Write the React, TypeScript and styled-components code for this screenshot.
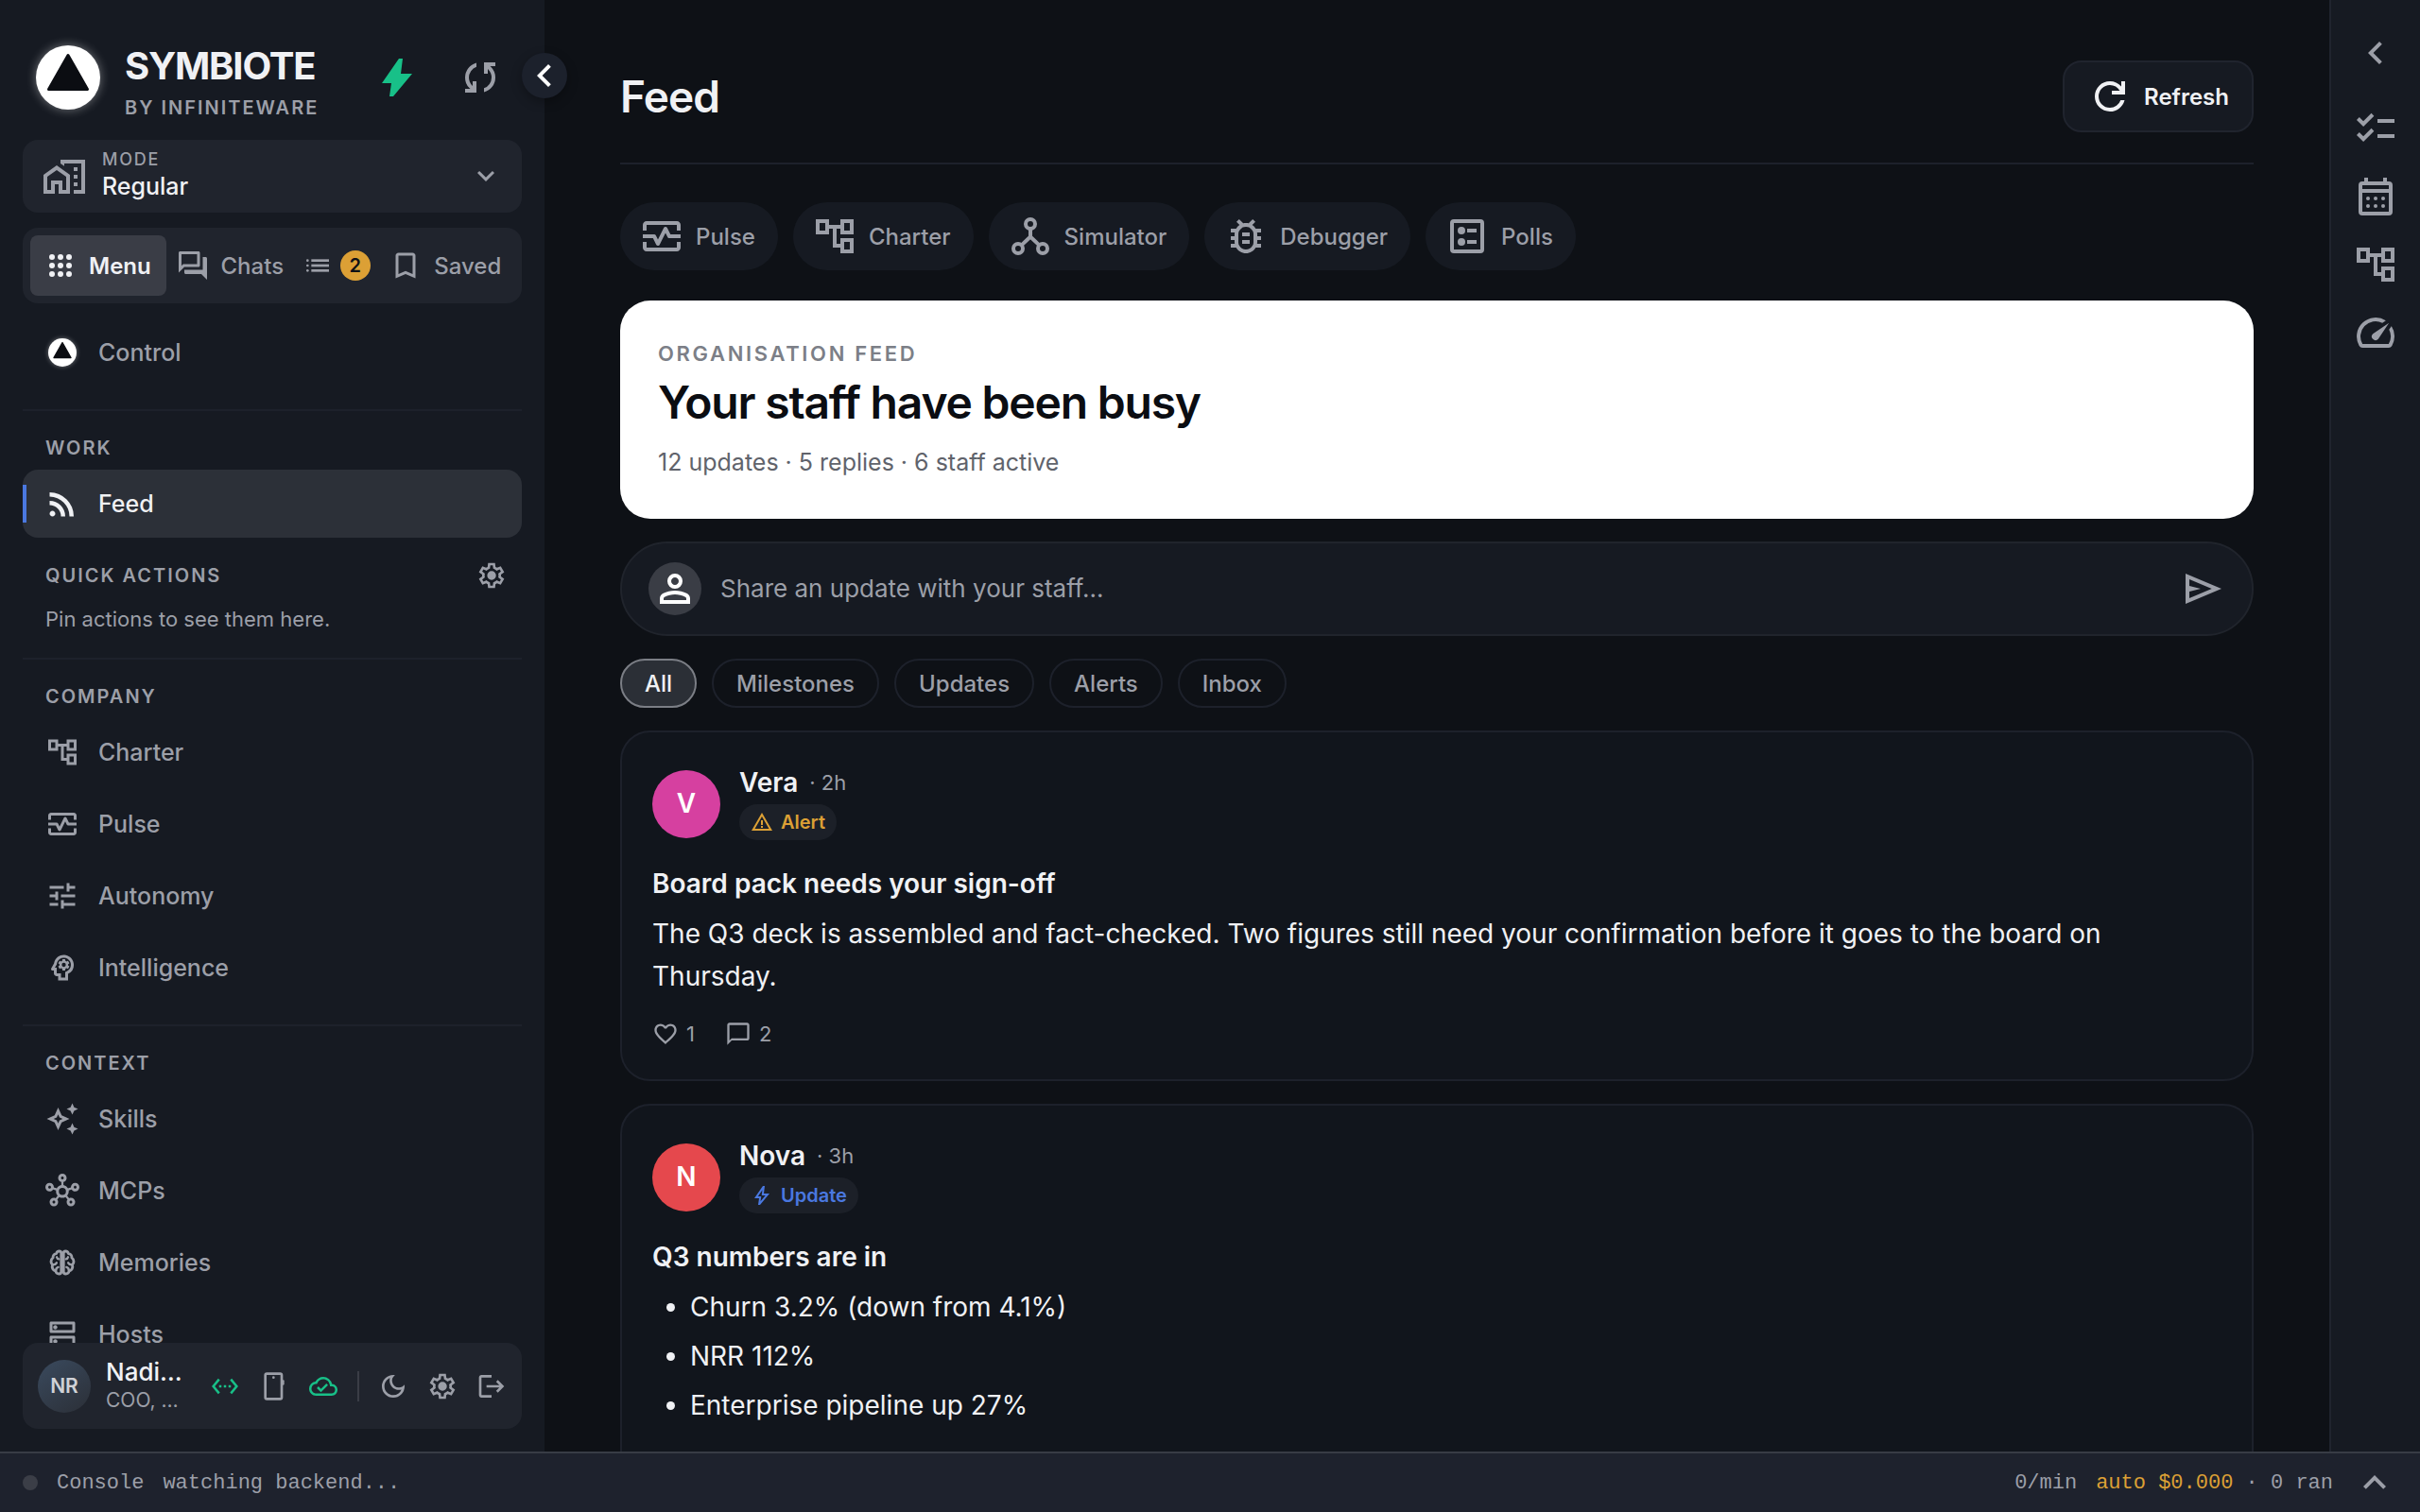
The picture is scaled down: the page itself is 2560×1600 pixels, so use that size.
import React from "react";
import styled, { createGlobalStyle, css } from "styled-components";
import {
  MdChatBubbleOutline,
  MdChecklist,
  MdFavoriteBorder,
  MdBookmarkBorder,
  MdLogout,
  MdOutlineAccountTree,
  MdOutlineAutoAwesome,
  MdOutlineBugReport,
  MdOutlineCloudDone,
  MdOutlineDarkMode,
  MdOutlineDns,
  MdOutlineForum,
  MdOutlineHomeWork,
  MdOutlineHub,
  MdOutlineMonitorHeart,
  MdOutlinePsychology,
  MdSettingsEthernet,
  MdSpeed,
  MdTune,
  MdWarningAmber,
} from "react-icons/md";

const color = {
  page: "#0e1116",
  panel: "#161a22",
  raised: "#20242d",
  active: "#2c3038",
  card: "#11151c",
  line: "#1d212b",
  text: "#f0f1f4",
  muted: "#9c9fa8",
  amber: "#dca035",
  green: "#18c088",
  blue: "#4a78e0",
};

const sans = `Inter, "Liberation Sans", sans-serif`;
const mono = `"Liberation Mono", monospace`;

const GlobalStyle = createGlobalStyle`
  *, *::before, *::after { box-sizing: border-box; }
  body { margin: 0; background: ${color.page}; color: ${color.text}; font-family: ${sans}; font-size: 24px; }
  button, input, select { font: inherit; color: inherit; margin: 0; padding: 0; border: 0; background: none; }
  button { cursor: pointer; }
  h1, h2, h3, p, ul { margin: 0; padding: 0; font: inherit; }
  a { color: inherit; text-decoration: none; }
  svg { display: block; flex-shrink: 0; }
`;

/* ---------- icons ---------- */

type IconProps = { size?: number };

const Symbol = ({ d, size = 48 }: IconProps & { d: string }) => (
  <svg width={size} height={size} viewBox="0 -960 960 960" fill="currentColor" aria-hidden="true">
    <path d={d} />
  </svg>
);

const paths = {
  bolt: "m320-80 40-280H160l360-520h80l-40 320h240L400-80h-80Z",
  boltOutline: "m422-232 207-248H469l29-227-185 267h139l-30 208ZM320-80l40-280H160l360-520h80l-40 320h240L400-80h-80Z",
  sync: "M160-160v-80h110l-16-14q-52-46-73-105t-21-119q0-111 66.5-197.5T400-790v84q-72 26-116 88.5T240-478q0 45 17 87.5t53 78.5l10 10v-98h80v240H160Zm400-10v-84q72-26 116-88.5T720-482q0-45-17-87.5T650-648l-10-10v98h-80v-240h240v80H690l16 14q49 49 71.5 106.5T800-482q0 111-66.5 197.5T560-170Z",
  refresh: "M480-160q-134 0-227-93t-93-227q0-134 93-227t227-93q69 0 132 28.5T720-690v-110h80v280H520v-80h168q-32-56-87.5-88T480-720q-100 0-170 70t-70 170q0 100 70 170t170 70q77 0 139-44t87-116h84q-28 106-114 173t-196 67Z",
  settings: "m370-80-16-128q-13-5-24.5-12T307-235l-119 50L78-375l103-78q-1-7-1-13.5v-27q0-6.5 1-13.5L78-585l110-190 119 50q11-8 23-15t24-12l16-128h220l16 128q13 5 24.5 12t22.5 15l119-50 110 190-103 78q1 7 1 13.5v27q0 6.5-2 13.5l103 78-110 190-118-50q-11 8-23 15t-24 12L590-80H370Zm70-80h79l14-106q31-8 57.5-23.5T639-327l99 41 39-68-86-65q5-14 7-29.5t2-31.5q0-16-2-31.5t-7-29.5l86-65-39-68-99 42q-22-23-48.5-38.5T533-694l-13-106h-79l-14 106q-31 8-57.5 23.5T321-633l-99-41-39 68 86 64q-5 15-7 30t-2 32q0 16 2 31t7 30l-86 65 39 68 99-42q22 23 48.5 38.5T427-266l13 106Zm42-180q58 0 99-41t41-99q0-58-41-99t-99-41q-59 0-99.5 41T342-480q0 58 40.5 99t99.5 41Z",
  send: "M120-160v-640l760 320-760 320Zm80-120 474-200-474-200v140l240 60-240 60v140Z",
  person: "M480-480q-66 0-113-47t-47-113q0-66 47-113t113-47q66 0 113 47t47 113q0 66-47 113t-113 47ZM160-160v-112q0-34 17.5-62.5T224-378q62-31 126-46.5T480-440q66 0 130 15.5T736-378q29 15 46.5 43.5T800-272v112H160Zm80-80h480v-32q0-11-5.5-20T700-306q-54-27-109-40.5T480-360q-56 0-111 13.5T260-306q-9 5-14.5 14t-5.5 20v32Zm240-320q33 0 56.5-23.5T560-640q0-33-23.5-56.5T480-720q-33 0-56.5 23.5T400-640q0 33 23.5 56.5T480-560Z",
  feed: "M200-120q-33 0-56.5-23.5T120-200q0-33 23.5-56.5T200-280q33 0 56.5 23.5T280-200q0 33-23.5 56.5T200-120Zm480 0q0-117-44-218.5T516-516q-76-76-177.5-120T120-680v-120q142 0 265 53t216 146q93 93 146 216t53 265H680Zm-240 0q0-67-25-124.5T346-346q-44-44-101.5-69T120-440v-120q92 0 171.5 34.5T431-431q60 60 94.5 139.5T560-120H440Z",
  chevronLeft: "M560-240 320-480l240-240 56 56-184 184 184 184-56 56Z",
  expandLess: "m296-345-56-56 240-240 240 240-56 56-184-184-184 184Z",
  expandMore: "M480-345 240-585l56-56 184 184 184-184 56 56-240 240Z",
};

const AppsIcon = ({ size = 36 }: IconProps) => (
  <svg width={size} height={size} viewBox="0 0 24 24" fill="currentColor" aria-hidden="true">
    {[6, 12, 18].flatMap((y) => [6, 12, 18].map((x) => <circle key={`${x}-${y}`} cx={x} cy={y} r="2" />))}
  </svg>
);

const ListIcon = ({ size = 32 }: IconProps) => (
  <svg width={size} height={size} viewBox="0 0 24 24" fill="currentColor" aria-hidden="true">
    {[8, 12, 16].map((y) => (
      <g key={y}>
        <circle cx="4" cy={y} r="1" />
        <rect x="7" y={y - 1} width="14" height="2" />
      </g>
    ))}
  </svg>
);

const SimulatorIcon = ({ size = 48 }: IconProps) => (
  <svg width={size} height={size} viewBox="0 0 24 24" fill="none" stroke="currentColor" strokeWidth="2" aria-hidden="true">
    <circle cx="12" cy="5.5" r="2.5" />
    <circle cx="5.5" cy="18.5" r="2.5" />
    <circle cx="18.5" cy="18.5" r="2.5" />
    <path d="M12 8v4.5M7.2 16.8 12 12.3l4.8 4.5" />
  </svg>
);

const PollsIcon = ({ size = 48 }: IconProps) => (
  <svg width={size} height={size} viewBox="0 0 24 24" fill="currentColor" aria-hidden="true">
    <rect x="4" y="4" width="16" height="16" rx="1" fill="none" stroke="currentColor" strokeWidth="2" />
    <circle cx="9" cy="9" r="2" />
    <circle cx="9" cy="15" r="2" />
    <path d="M12 8h5v2h-5zM12 14h5v2h-5z" />
  </svg>
);

const CalendarIcon = ({ size = 48 }: IconProps) => (
  <svg width={size} height={size} viewBox="0 0 24 24" fill="currentColor" aria-hidden="true">
    <path d="M19 4h-1V2h-2v2H8V2H6v2H5a2 2 0 0 0-2 2v14a2 2 0 0 0 2 2h14a2 2 0 0 0 2-2V6a2 2 0 0 0-2-2zm0 16H5V10h14v10zm0-12H5V6h14v2z" />
    {[13, 17].flatMap((y) => [8, 12, 16].map((x) => <circle key={`${x}-${y}`} cx={x} cy={y} r="1" />))}
  </svg>
);

const PhoneIcon = ({ size = 32 }: IconProps) => (
  <svg width={size} height={size} viewBox="0 0 24 24" fill="currentColor" aria-hidden="true">
    <rect x="5" y="2" width="13" height="20" rx="1.2" fill="none" stroke="currentColor" strokeWidth="2" />
    <circle cx="11.5" cy="5" r="1" />
    <rect x="18.4" y="7" width="1.6" height="4" rx="0.6" />
  </svg>
);

const BrainIcon = ({ size = 36 }: IconProps) => (
  <svg width={size} height={size} viewBox="0 0 24 24" fill="none" stroke="currentColor" strokeWidth="1.9" strokeLinecap="round" strokeLinejoin="round" aria-hidden="true">
    <path d="M11.2 5.4C11.2 4.5 10.6 4 9.8 4 8.7 4 8 4.7 7.8 5.7 6.3 5.8 5.2 7 5.4 8.6 4.4 9.3 4 10.5 4 11.4c0 .9.4 1.7 1 2.3-.6 1.9.3 3.8 2.2 4.3C7.5 19.3 8.5 20 9.6 20c.9 0 1.6-.6 1.6-1.5z" />
    <path d="M12.8 5.4C12.8 4.5 13.4 4 14.2 4c1.1 0 1.8.7 2 1.7 1.5.1 2.6 1.3 2.4 2.9 1 .7 1.4 1.9 1.4 2.8 0 .9-.4 1.7-1 2.3.6 1.9-.3 3.8-2.2 4.3-.3 1.3-1.3 2-2.4 2-.9 0-1.6-.6-1.6-1.5z" />
    <path
      d="M8 8.2c.2.9.8 1.3 1.5 1.4M5.2 13.5c1.2.1 2.2-.4 2.7-1.3M7.5 17.5c0-1.2.6-1.9 1.6-2.2M16 8.2c-.2.9-.8 1.3-1.5 1.4M18.8 13.5c-1.2.1-2.2-.4-2.7-1.3M16.5 17.5c0-1.2-.6-1.9-1.6-2.2"
      strokeWidth="1.6"
    />
  </svg>
);

const LogoGlow = styled.span<{ $size: number }>`
  display: grid;
  place-items: center;
  flex-shrink: 0;
  width: ${(p) => p.$size}px;
  height: ${(p) => p.$size}px;
  border-radius: 50%;
  background: #fff;
  box-shadow: 0 0 ${(p) => Math.round(p.$size / 6)}px rgba(255, 255, 255, 0.4);
`;

const Logo = ({ size }: { size: number }) => (
  <LogoGlow $size={size}>
    <svg width={size} height={size} viewBox="0 0 68 68" aria-hidden="true">
      <path d="M34 10.5 54.5 46.5H13.5z" fill="#0b0d12" stroke="#0b0d12" strokeWidth="3" strokeLinejoin="round" />
    </svg>
  </LogoGlow>
);

/* ---------- frame ---------- */

const Shell = styled.div`
  display: flex;
  flex-direction: column;
  height: 100vh;
  overflow: hidden;
`;

const Body = styled.div`
  display: flex;
  flex: 1;
  min-height: 0;
`;

const Sidebar = styled.aside`
  position: relative;
  z-index: 1;
  display: flex;
  flex-direction: column;
  width: 576px;
  flex-shrink: 0;
  padding: 24px;
  background: ${color.panel};
`;

const IconButton = styled.button<{ $size?: number; $tint?: string }>`
  display: grid;
  place-items: center;
  width: ${(p) => p.$size ?? 48}px;
  height: ${(p) => p.$size ?? 48}px;
  flex-shrink: 0;
  color: ${(p) => p.$tint ?? color.muted};
`;

const CollapseButton = styled(IconButton)`
  position: absolute;
  top: 56px;
  right: -24px;
  border-radius: 50%;
  background: #1c212c;
  color: #fff;
  box-shadow: 0 4px 12px rgba(0, 0, 0, 0.3);
`;

const Brand = styled.header`
  display: flex;
  align-items: center;
  height: 116px;
  margin-bottom: 8px;
  padding: 0 20px 0 14px;
`;

const BrandText = styled.div`
  flex: 1;
  margin-left: 26px;
`;

const BrandName = styled.div`
  font-size: 40px;
  font-weight: 700;
  line-height: 60px;
  letter-spacing: -0.03em;
`;

const BrandBy = styled.div`
  margin-top: 4px;
  font-size: 20px;
  font-weight: 600;
  line-height: 20px;
  letter-spacing: 0.1em;
  color: ${color.muted};
`;

const BrandActions = styled.div`
  display: flex;
  gap: 40px;
`;

const ModePicker = styled.label`
  display: flex;
  align-items: center;
  gap: 16px;
  height: 77px;
  flex-shrink: 0;
  margin-bottom: 16px;
  padding: 0 20px;
  border-radius: 16px;
  background: ${color.raised};
  color: ${color.muted};
`;

const ModeText = styled.span`
  display: flex;
  flex-direction: column;
  flex: 1;
  padding-bottom: 3px;
`;

const ModeLabel = styled.span`
  font-size: 18px;
  font-weight: 500;
  line-height: 24px;
  letter-spacing: 0.1em;
`;

const ModeSelect = styled.select`
  appearance: none;
  font-size: 25px;
  font-weight: 500;
  line-height: 32px;
  color: ${color.text};
`;

const Tabs = styled.div`
  display: flex;
  height: 80px;
  flex-shrink: 0;
  margin-bottom: 16px;
  padding: 8px 12px 8px 8px;
  border-radius: 16px;
  background: ${color.raised};
`;

const Tab = styled.button<{ $active?: boolean; $gap?: number }>`
  display: flex;
  align-items: center;
  justify-content: center;
  gap: ${(p) => p.$gap ?? 12}px;
  flex: 1 1 auto;
  border-radius: 8px;
  font-size: 24px;
  font-weight: 500;
  color: ${color.muted};
  ${(p) =>
    p.$active &&
    css`
      flex: 0 0 auto;
      padding: 0 16px 0 14px;
      font-weight: 600;
      color: ${color.text};
      background: #3a3d46;
    `}
`;

const Count = styled.span`
  display: grid;
  place-items: center;
  width: 32px;
  height: 32px;
  border-radius: 50%;
  font-size: 20px;
  font-weight: 600;
  color: #0e1116;
  background: ${color.amber};
`;

const Nav = styled.nav`
  flex: 1;
  min-height: 0;
  overflow: hidden;
`;

const NavGroup = styled.section`
  display: flex;
  flex-direction: column;
  gap: 4px;
  & + & {
    margin-top: 24px;
    border-top: 2px solid ${color.line};
  }
`;

const GroupLabel = styled.h2`
  padding: 24px 24px 4px;
  font-size: 20px;
  font-weight: 600;
  line-height: 30px;
  letter-spacing: 0.1em;
  color: ${color.muted};
`;

const NavItem = styled.a<{ $active?: boolean }>`
  position: relative;
  display: flex;
  align-items: center;
  gap: 20px;
  height: 72px;
  flex-shrink: 0;
  padding: 0 24px;
  border-radius: 16px;
  font-size: 25px;
  font-weight: 500;
  color: ${color.muted};
  ${(p) =>
    p.$active &&
    css`
      color: ${color.text};
      background: ${color.active};
      &::before {
        content: "";
        position: absolute;
        left: 0;
        top: 16px;
        width: 4px;
        height: 40px;
        background: ${color.blue};
      }
    `}
`;

const NavIcon = styled.span`
  display: grid;
  place-items: center;
  width: 36px;
  height: 36px;
`;

const QuickHeader = styled.div`
  display: flex;
  align-items: center;
  justify-content: space-between;
  height: 48px;
  margin-top: 12px;
  padding: 0 8px 0 24px;
`;

const QuickLabel = styled(GroupLabel)`
  padding: 0;
`;

const QuickHint = styled.p`
  padding: 2px 24px 0;
  font-size: 22px;
  line-height: 33px;
  color: ${color.muted};
`;

const UserCard = styled.div`
  display: flex;
  align-items: center;
  height: 91px;
  flex-shrink: 0;
  padding: 0 8px 0 16px;
  border-radius: 16px;
  background: ${color.raised};
`;

const UserBadge = styled.span`
  display: grid;
  place-items: center;
  width: 56px;
  height: 56px;
  border-radius: 50%;
  font-size: 21px;
  font-weight: 600;
  color: #cfd1d6;
  background: linear-gradient(145deg, #3a4a5e, #2b2f37);
`;

const UserText = styled.div`
  flex: 1;
  min-width: 0;
  margin-left: 16px;
  line-height: 30px;
  white-space: nowrap;
`;

const UserName = styled.div`
  font-size: 26px;
  font-weight: 500;
`;

const UserRole = styled.div`
  font-size: 21px;
  color: ${color.muted};
`;

const UserActions = styled.div`
  display: flex;
  align-items: center;
  gap: 4px;
`;

const Separator = styled.span`
  width: 2px;
  height: 32px;
  margin: 0 8px;
  background: #3a3d46;
`;

/* ---------- main column ---------- */

const Main = styled.main`
  flex: 1;
  min-width: 0;
  overflow: hidden;
  padding: 64px 80px 0;
`;

const PageHeader = styled.header`
  display: flex;
  align-items: center;
  justify-content: space-between;
  padding-bottom: 32px;
  border-bottom: 2px solid ${color.line};
`;

const PageTitle = styled.h1`
  font-size: 46px;
  font-weight: 600;
  line-height: 76px;
  letter-spacing: -0.02em;
`;

const RefreshButton = styled.button`
  display: flex;
  align-items: center;
  gap: 12px;
  height: 76px;
  padding: 0 24px;
  border: 2px solid #20242e;
  border-radius: 20px;
  font-size: 24px;
  font-weight: 600;
  background: ${color.panel};
`;

const PillRow = styled.div`
  display: flex;
  gap: 16px;
  margin: 40px 0 32px;
`;

const Pill = styled.a`
  display: flex;
  align-items: center;
  gap: 12px;
  height: 72px;
  padding: 0 24px 0 20px;
  border-radius: 36px;
  font-size: 24px;
  font-weight: 500;
  color: ${color.muted};
  background: ${color.panel};
`;

const Hero = styled.section`
  padding: 40px;
  border-radius: 32px;
  color: #0b0d12;
  background: #fff;
`;

const HeroLabel = styled.p`
  font-size: 22px;
  font-weight: 600;
  line-height: 32px;
  letter-spacing: 0.12em;
  color: #7c7f87;
`;

const HeroTitle = styled.h2`
  font-size: 48px;
  font-weight: 600;
  line-height: 72px;
  letter-spacing: -0.025em;
`;

const HeroStats = styled.p`
  margin-top: 8px;
  font-size: 25px;
  line-height: 39px;
  color: #60636b;
`;

const Composer = styled.form`
  display: flex;
  align-items: center;
  gap: 20px;
  height: 100px;
  margin: 24px 0;
  padding: 0 28px;
  border: 2px solid #20242c;
  border-radius: 50px;
  background: ${color.panel};
`;

const ComposerAvatar = styled.span`
  display: grid;
  place-items: center;
  width: 56px;
  height: 56px;
  border-radius: 50%;
  color: #fff;
  background: #3a3d45;
`;

const ComposerInput = styled.input`
  flex: 1;
  min-width: 0;
  padding-bottom: 2px;
  font-size: 26px;
  outline: none;
  &::placeholder {
    color: ${color.muted};
    opacity: 1;
  }
`;

const Filters = styled.div`
  display: flex;
  gap: 16px;
  margin-bottom: 24px;
`;

const Filter = styled.button<{ $active?: boolean }>`
  height: 52px;
  padding: 0 24px;
  border: 2px solid ${(p) => (p.$active ? "#7b7e85" : color.line)};
  border-radius: 26px;
  font-size: 24px;
  font-weight: 500;
  color: ${(p) => (p.$active ? color.text : color.muted)};
  background: ${(p) => (p.$active ? "#2b2f36" : "transparent")};
`;

const Posts = styled.div`
  display: flex;
  flex-direction: column;
  gap: 24px;
`;

const Card = styled.article`
  padding: 37px 32px 32px;
  border: 2px solid ${color.line};
  border-radius: 32px;
  background: ${color.card};
  font-size: 28px;
  line-height: 45px;
`;

const CardHeader = styled.header`
  display: flex;
  align-items: center;
  gap: 20px;
  margin-bottom: 24px;
`;

const Avatar = styled.span<{ $tint: string }>`
  display: grid;
  place-items: center;
  width: 72px;
  height: 72px;
  border-radius: 50%;
  font-weight: 600;
  color: #fff;
  background: ${(p) => p.$tint};
`;

const Byline = styled.div`
  display: flex;
  align-items: center;
  gap: 12px;
  line-height: 32px;
`;

const Author = styled.span`
  font-weight: 600;
`;

const Age = styled.span`
  font-size: 22px;
  color: ${color.muted};
`;

const Kind = styled.span<{ $tint: string }>`
  display: inline-flex;
  align-items: center;
  gap: 8px;
  height: 38px;
  margin-top: 7px;
  padding: 0 12px;
  border-radius: 19px;
  font-size: 20px;
  font-weight: 600;
  line-height: 38px;
  vertical-align: top;
  color: ${(p) => p.$tint};
  background: #1c2028;
`;

const CardTitle = styled.h3`
  margin-bottom: 8px;
  font-weight: 600;
`;

const CardList = styled.ul`
  display: flex;
  flex-direction: column;
  gap: 7px;
  padding-left: 40px;
`;

const Reactions = styled.footer`
  display: flex;
  gap: 32px;
  margin-top: 22px;
`;

const Reaction = styled.button`
  display: flex;
  align-items: center;
  gap: 8px;
  font-size: 22px;
  line-height: 32px;
  color: ${color.muted};
`;

/* ---------- right rail and console ---------- */

const Rail = styled.aside`
  display: flex;
  flex-direction: column;
  align-items: center;
  width: 96px;
  flex-shrink: 0;
  padding-top: 20px;
  border-left: 2px solid #20242e;
  background: ${color.panel};
`;

const RailTools = styled.div`
  margin-top: 8px;
`;

const Console = styled.footer`
  display: flex;
  align-items: center;
  gap: 20px;
  height: 64px;
  flex-shrink: 0;
  padding: 0 24px;
  border-top: 2px solid #383c45;
  font-family: ${mono};
  font-size: 22px;
  color: ${color.muted};
  background: #1e222d;
`;

const ConsoleDot = styled.span`
  width: 16px;
  height: 16px;
  border-radius: 50%;
  background: #3b3e47;
`;

const ConsoleLog = styled.span`
  flex: 1;
`;

const Cost = styled.span`
  color: ${color.amber};
`;

/* ---------- data ---------- */

type Item = { label: string; icon: React.ReactNode };

const company: Item[] = [
  { label: "Charter", icon: <MdOutlineAccountTree size={36} /> },
  { label: "Pulse", icon: <MdOutlineMonitorHeart size={36} /> },
  { label: "Autonomy", icon: <MdTune size={36} /> },
  { label: "Intelligence", icon: <MdOutlinePsychology size={36} /> },
];

const context: Item[] = [
  { label: "Skills", icon: <MdOutlineAutoAwesome size={36} /> },
  { label: "MCPs", icon: <MdOutlineHub size={36} /> },
  { label: "Memories", icon: <BrainIcon /> },
  { label: "Hosts", icon: <MdOutlineDns size={36} /> },
];

const shortcuts: Item[] = [
  { label: "Pulse", icon: <MdOutlineMonitorHeart size={48} /> },
  { label: "Charter", icon: <MdOutlineAccountTree size={48} /> },
  { label: "Simulator", icon: <SimulatorIcon /> },
  { label: "Debugger", icon: <MdOutlineBugReport size={48} /> },
  { label: "Polls", icon: <PollsIcon /> },
];

const railTools: Item[] = [
  { label: "Tasks", icon: <MdChecklist size={48} /> },
  { label: "Calendar", icon: <CalendarIcon /> },
  { label: "Charter", icon: <MdOutlineAccountTree size={48} /> },
  { label: "Usage", icon: <MdSpeed size={48} /> },
];

const NavLinks = ({ items }: { items: Item[] }) => (
  <>
    {items.map((item) => (
      <NavItem key={item.label} href="#">
        <NavIcon>{item.icon}</NavIcon>
        {item.label}
      </NavItem>
    ))}
  </>
);

type PostProps = {
  author: string;
  age: string;
  tint: string;
  kind: string;
  kindTint: string;
  kindIcon: React.ReactNode;
  title: string;
  likes: number;
  replies: number;
  children: React.ReactNode;
};

const Post = (p: PostProps) => (
  <Card>
    <CardHeader>
      <Avatar $tint={p.tint}>{p.author[0]}</Avatar>
      <div>
        <Byline>
          <Author>{p.author}</Author>
          <Age>· {p.age}</Age>
        </Byline>
        <Kind $tint={p.kindTint}>
          {p.kindIcon}
          {p.kind}
        </Kind>
      </div>
    </CardHeader>
    <CardTitle>{p.title}</CardTitle>
    {p.children}
    <Reactions>
      <Reaction aria-label="Like">
        <MdFavoriteBorder size={28} />
        {p.likes}
      </Reaction>
      <Reaction aria-label="Reply">
        <MdChatBubbleOutline size={28} />
        {p.replies}
      </Reaction>
    </Reactions>
  </Card>
);

export default function App() {
  return (
    <Shell>
      <GlobalStyle />
      <Body>
        <Sidebar>
          <CollapseButton aria-label="Collapse sidebar">
            <Symbol d={paths.chevronLeft} />
          </CollapseButton>
          <Brand>
            <Logo size={68} />
            <BrandText>
              <BrandName>SYMBIOTE</BrandName>
              <BrandBy>BY INFINITEWARE</BrandBy>
            </BrandText>
            <BrandActions>
              <IconButton aria-label="Power" $tint={color.green}>
                <Symbol d={paths.bolt} />
              </IconButton>
              <IconButton aria-label="Sync">
                <Symbol d={paths.sync} />
              </IconButton>
            </BrandActions>
          </Brand>

          <ModePicker>
            <MdOutlineHomeWork size={48} />
            <ModeText>
              <ModeLabel>MODE</ModeLabel>
              <ModeSelect>
                <option>Regular</option>
              </ModeSelect>
            </ModeText>
            <Symbol d={paths.expandMore} size={36} />
          </ModePicker>

          <Tabs>
            <Tab $active>
              <AppsIcon />
              Menu
            </Tab>
            <Tab>
              <MdOutlineForum size={36} />
              Chats
            </Tab>
            <Tab $gap={8} aria-label="Queue">
              <ListIcon />
              <Count>2</Count>
            </Tab>
            <Tab>
              <MdBookmarkBorder size={36} />
              Saved
            </Tab>
          </Tabs>

          <Nav>
            <NavGroup>
              <NavItem href="#">
                <NavIcon>
                  <Logo size={30} />
                </NavIcon>
                Control
              </NavItem>
            </NavGroup>
            <NavGroup>
              <GroupLabel>WORK</GroupLabel>
              <NavItem href="#" $active>
                <NavIcon>
                  <Symbol d={paths.feed} size={36} />
                </NavIcon>
                Feed
              </NavItem>
              <QuickHeader>
                <QuickLabel>QUICK ACTIONS</QuickLabel>
                <IconButton aria-label="Configure quick actions">
                  <Symbol d={paths.settings} size={32} />
                </IconButton>
              </QuickHeader>
              <QuickHint>Pin actions to see them here.</QuickHint>
            </NavGroup>
            <NavGroup>
              <GroupLabel>COMPANY</GroupLabel>
              <NavLinks items={company} />
            </NavGroup>
            <NavGroup>
              <GroupLabel>CONTEXT</GroupLabel>
              <NavLinks items={context} />
            </NavGroup>
          </Nav>

          <UserCard>
            <UserBadge>NR</UserBadge>
            <UserText>
              <UserName>Nadi…</UserName>
              <UserRole>COO, …</UserRole>
            </UserText>
            <UserActions>
              <IconButton aria-label="Connection" $tint={color.green}>
                <MdSettingsEthernet size={30} />
              </IconButton>
              <IconButton aria-label="Device">
                <PhoneIcon />
              </IconButton>
              <IconButton aria-label="Cloud status" $tint={color.green}>
                <MdOutlineCloudDone size={30} />
              </IconButton>
              <Separator />
              <IconButton aria-label="Theme">
                <MdOutlineDarkMode size={32} />
              </IconButton>
              <IconButton aria-label="Settings">
                <Symbol d={paths.settings} size={32} />
              </IconButton>
              <IconButton aria-label="Log out">
                <MdLogout size={32} />
              </IconButton>
            </UserActions>
          </UserCard>
        </Sidebar>

        <Main>
          <PageHeader>
            <PageTitle>Feed</PageTitle>
            <RefreshButton>
              <Symbol d={paths.refresh} />
              Refresh
            </RefreshButton>
          </PageHeader>

          <PillRow>
            {shortcuts.map((s) => (
              <Pill key={s.label} href="#">
                {s.icon}
                {s.label}
              </Pill>
            ))}
          </PillRow>

          <Hero>
            <HeroLabel>ORGANISATION FEED</HeroLabel>
            <HeroTitle>Your staff have been busy</HeroTitle>
            <HeroStats>12 updates · 5 replies · 6 staff active</HeroStats>
          </Hero>

          <Composer>
            <ComposerAvatar>
              <Symbol d={paths.person} />
            </ComposerAvatar>
            <ComposerInput aria-label="Share an update" placeholder="Share an update with your staff…" />
            <IconButton type="button" aria-label="Send">
              <Symbol d={paths.send} />
            </IconButton>
          </Composer>

          <Filters>
            {["All", "Milestones", "Updates", "Alerts", "Inbox"].map((f) => (
              <Filter key={f} $active={f === "All"}>
                {f}
              </Filter>
            ))}
          </Filters>

          <Posts>
            <Post
              author="Vera"
              age="2h"
              tint="#d640a0"
              kind="Alert"
              kindTint={color.amber}
              kindIcon={<MdWarningAmber size={24} />}
              title="Board pack needs your sign-off"
              likes={1}
              replies={2}
            >
              <p>
                The Q3 deck is assembled and fact-checked. Two figures still need your confirmation before it goes to
                the board on Thursday.
              </p>
            </Post>
            <Post
              author="Nova"
              age="3h"
              tint="#e5484d"
              kind="Update"
              kindTint={color.blue}
              kindIcon={<Symbol d={paths.boltOutline} size={24} />}
              title="Q3 numbers are in"
              likes={4}
              replies={1}
            >
              <CardList>
                <li>Churn 3.2% (down from 4.1%)</li>
                <li>NRR 112%</li>
                <li>Enterprise pipeline up 27%</li>
              </CardList>
            </Post>
          </Posts>
        </Main>

        <Rail>
          <IconButton $size={72} aria-label="Expand panel">
            <Symbol d={paths.chevronLeft} />
          </IconButton>
          <RailTools>
            {railTools.map((t) => (
              <IconButton key={t.label} $size={72} aria-label={t.label}>
                {t.icon}
              </IconButton>
            ))}
          </RailTools>
        </Rail>
      </Body>

      <Console>
        <ConsoleDot />
        <span>Console</span>
        <ConsoleLog>watching backend...</ConsoleLog>
        <span>0/min</span>
        <span>
          <Cost>auto $0.000</Cost> · 0 ran
        </span>
        <IconButton aria-label="Expand console">
          <Symbol d={paths.expandLess} />
        </IconButton>
      </Console>
    </Shell>
  );
}
